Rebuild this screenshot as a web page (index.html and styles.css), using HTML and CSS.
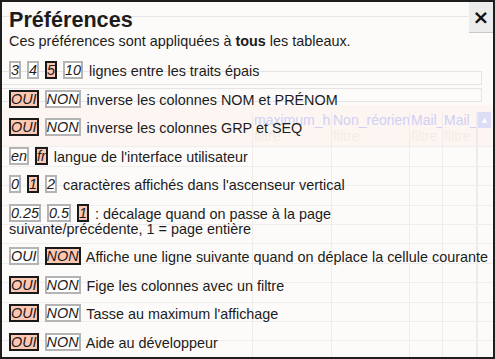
FILE: index.html
```html
<!DOCTYPE html>
<html lang="fr">
<head>
    <meta charset="UTF-8">
    <meta name="viewport" content="width=device-width, initial-scale=1.0">
    <title>Préférences</title>
    <link rel="stylesheet" href="styles.css">
</head>
<body>
    <div id="sheet">
        <div class="sheet-bar"></div>
        <div class="sheet-fields">
            <div class="field"></div>
            <div class="field"></div>
        </div>
        <div class="sheet-grid">
            <div class="grow head">
                <span class="cell c0"></span>
                <span class="cell c1">maximum_h</span>
                <span class="cell c2">Non_réorien</span>
                <span class="cell c3">Mail_</span>
                <span class="cell c4">Mail_</span>
                <span class="scroll">&#9650;</span>
            </div>
            <div class="grow filter">
                <span class="cell c0"></span>
                <span class="cell c1">filtre</span>
                <span class="cell c2">filtre</span>
                <span class="cell c3">filtre</span>
                <span class="cell c4">filtre</span>
                <span class="scroll"></span>
            </div>
            <div class="grow"><span class="cell c0"></span><span class="cell c1"></span><span class="cell c2"></span><span class="cell c3"></span><span class="cell c4"></span><span class="scroll"></span></div>
            <div class="grow"><span class="cell c0"></span><span class="cell c1"></span><span class="cell c2"></span><span class="cell c3"></span><span class="cell c4"></span><span class="scroll"></span></div>
            <div class="grow"><span class="cell c0"></span><span class="cell c1"></span><span class="cell c2"></span><span class="cell c3"></span><span class="cell c4"></span><span class="scroll"></span></div>
            <div class="grow"><span class="cell c0"></span><span class="cell c1"></span><span class="cell c2"></span><span class="cell c3"></span><span class="cell c4"></span><span class="scroll"></span></div>
            <div class="grow"><span class="cell c0"></span><span class="cell c1"></span><span class="cell c2"></span><span class="cell c3"></span><span class="cell c4"></span><span class="scroll"></span></div>
            <div class="grow"><span class="cell c0"></span><span class="cell c1"></span><span class="cell c2"></span><span class="cell c3"></span><span class="cell c4"></span><span class="scroll"></span></div>
            <div class="grow"><span class="cell c0"></span><span class="cell c1"></span><span class="cell c2"></span><span class="cell c3"></span><span class="cell c4"></span><span class="scroll"></span></div>
            <div class="grow"><span class="cell c0"></span><span class="cell c1"></span><span class="cell c2"></span><span class="cell c3"></span><span class="cell c4"></span><span class="scroll"></span></div>
            <div class="grow"><span class="cell c0"></span><span class="cell c1"></span><span class="cell c2"></span><span class="cell c3"></span><span class="cell c4"></span><span class="scroll"></span></div>
            <div class="grow"><span class="cell c0"></span><span class="cell c1"></span><span class="cell c2"></span><span class="cell c3"></span><span class="cell c4"></span><span class="scroll"></span></div>
            <div class="grow"><span class="cell c0"></span><span class="cell c1"></span><span class="cell c2"></span><span class="cell c3"></span><span class="cell c4"></span><span class="scroll"></span></div>
        </div>
    </div>

    <div id="prefs">
        <button class="close">&times;</button>
        <h1>Préférences</h1>
        <p class="intro">Ces préférences sont appliquées à <b>tous</b> les tableaux.</p>

        <div class="pref">
            <span class="opt">3</span> <span class="opt">4</span> <span class="opt on">5</span> <span class="opt">10</span>
            lignes entre les traits épais
        </div>
        <div class="pref">
            <span class="opt on">OUI</span> <span class="opt">NON</span>
            inverse les colonnes NOM et PRÉNOM
        </div>
        <div class="pref">
            <span class="opt on">OUI</span> <span class="opt">NON</span>
            inverse les colonnes GRP et SEQ
        </div>
        <div class="pref">
            <span class="opt">en</span> <span class="opt on">fr</span>
            langue de l'interface utilisateur
        </div>
        <div class="pref">
            <span class="opt">0</span> <span class="opt on">1</span> <span class="opt">2</span>
            caractères affichés dans l'ascenseur vertical
        </div>
        <div class="pref">
            <span class="opt">0.25</span> <span class="opt">0.5</span> <span class="opt on">1</span>
            : décalage quand on passe à la page<br>suivante/précédente, 1 = page entière
        </div>
        <div class="pref">
            <span class="opt">OUI</span> <span class="opt on">NON</span>
            Affiche une ligne suivante quand on déplace la cellule courante
        </div>
        <div class="pref">
            <span class="opt on">OUI</span> <span class="opt">NON</span>
            Fige les colonnes avec un filtre
        </div>
        <div class="pref">
            <span class="opt on">OUI</span> <span class="opt">NON</span>
            Tasse au maximum l'affichage
        </div>
        <div class="pref">
            <span class="opt on">OUI</span> <span class="opt">NON</span>
            Aide au développeur
        </div>
    </div>
</body>
</html>
```

FILE: styles.css
```css
body {
    margin: 0;
    width: 495px;
    height: 359px;
    overflow: hidden;
    background-color: #fdfbf9;
    font-family: "Liberation Sans", Arial, sans-serif;
    color: #1c1c1c;
}

/* the spreadsheet seen through the dialog */
#sheet {
    width: 495px;
    height: 359px;
}
.sheet-bar {
    width: 468px;
    height: 16px;
    border-bottom: 1px solid #e6e6e6;
}
.sheet-fields {
    padding-top: 54px;
}
.field {
    width: 480px;
    height: 12px;
    border: 1px solid #e6e4e2;
    margin-bottom: 3px;
}
.sheet-grid {
    padding-top: 7px;
    background: linear-gradient(#fcf5f1 0, #fcf5f1 42px, transparent 42px);
}
.grow {
    display: flex;
    height: 19.4px;
    border-bottom: 1px solid #f0eeec;
    box-sizing: border-box;
}
.grow.head {
    height: 16px;
    border-bottom: none;
}
.cell {
    overflow: hidden;
    white-space: nowrap;
    font-size: 14px;
    line-height: 16px;
    border-right: 1px solid #f0ecea;
    box-sizing: border-box;
    padding-left: 1px;
}
.head .cell {
    color: #d0d0f6;
}
.filter .cell {
    color: #f5ece7;
}
.c0 { width: 253px; }
.c1 { width: 79px; }
.c2 { width: 78px; }
.c3 { width: 33px; }
.c4 { width: 35px; border-right: 2px solid #ecebea; }
.scroll {
    width: 13px;
    font-size: 9px;
    line-height: 16px;
    text-align: center;
    color: #fff;
}
.head .scroll {
    background-color: #dcdcf6;
}

/* the dialog */
#prefs {
    position: absolute;
    top: 0;
    left: 0;
    width: 495px;
    height: 359px;
    border: 2px solid #1e1e1e;
    padding: 6px 0 0 7px;
    box-sizing: border-box;
    font-size: 14.4px;
}
.close {
    position: absolute;
    top: 0;
    right: 0;
    width: 24px;
    height: 31px;
    padding: 0;
    border: none;
    border-bottom: 1px solid #c8c8c8;
    background-color: #ececec;
    color: #111;
    font-family: "DejaVu Sans", sans-serif;
    font-size: 20px;
    font-weight: bold;
    line-height: 28px;
}
h1 {
    margin: 0;
    font-size: 21.6px;
    line-height: 24px;
}
.intro {
    margin: 1px 0 12px;
    line-height: 16px;
}
.pref {
    line-height: 15px;
    margin-bottom: 10.5px;
}
.opt {
    display: inline-block;
    margin-right: 2px;
    font-style: italic;
    line-height: 14px;
    border: 2px solid #b4b4b4;
    background-color: #fff;
    vertical-align: bottom;
}
.opt.on {
    border-color: #1a1a1a;
    background-color: #fcc8b4;
}
```
